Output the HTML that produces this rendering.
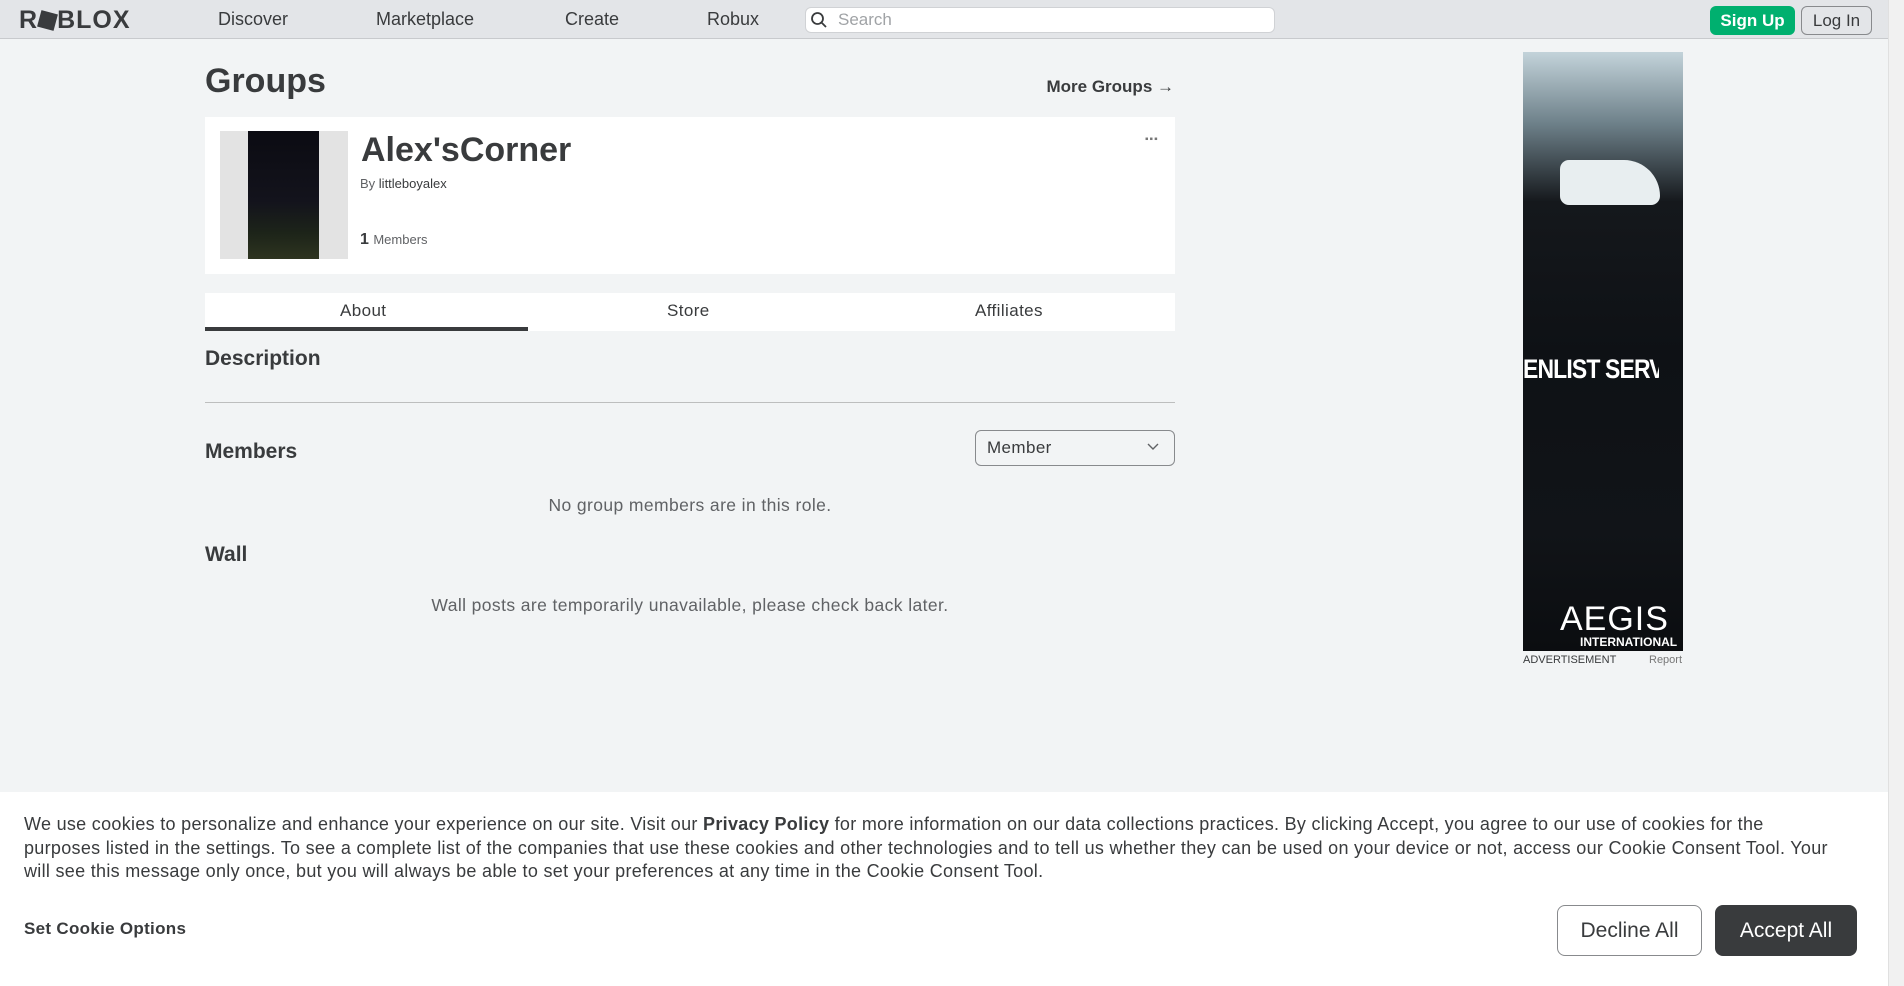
<!DOCTYPE html>
<html><head><meta charset="utf-8"><style>
*{box-sizing:border-box;margin:0;padding:0}
body{width:1904px;height:986px;overflow:hidden;background:#f2f4f5;font-family:"Liberation Sans",sans-serif;color:#393b3d;position:relative}
.abs{position:absolute}
.top{left:0;top:0;width:1888px;height:39px;background:#e3e5e8;border-bottom:1px solid #c8cacd}
.nav{font-size:18px;color:#393b3d;top:9px}
.sb{right:0;top:0;width:16px;height:986px;background:#f1f1f1;border-left:1px solid #e0e0e0}
.ls{letter-spacing:0.4px}
</style></head><body>
<div class="abs top"></div>
<div class="abs" style="left:19px;top:6px;font-size:25px;font-weight:900;letter-spacing:1px;color:#393b3d">R<span style="display:inline-block;width:17px;height:17px;background:#393b3d;transform:rotate(15deg);vertical-align:-1px;margin:0 1px"></span>BLOX</div>
<div class="abs nav" style="left:218px">Discover</div>
<div class="abs nav" style="left:376px">Marketplace</div>
<div class="abs nav" style="left:565px">Create</div>
<div class="abs nav" style="left:707px">Robux</div>
<div class="abs" style="left:805px;top:7px;width:470px;height:26px;background:#fff;border-radius:6px;border:1px solid #d0d2d5"></div>
<svg class="abs" style="left:810px;top:11px" width="18" height="18" viewBox="0 0 18 18"><circle cx="7.5" cy="7.5" r="5.5" fill="none" stroke="#393b3d" stroke-width="1.8"/><path d="M11.5 11.5L16 16" stroke="#393b3d" stroke-width="1.8"/></svg>
<div class="abs" style="left:838px;top:10px;font-size:17px;color:#a0a3a6">Search</div>
<div class="abs" style="left:1710px;top:6px;width:85px;height:29px;background:#00b06f;border-radius:6px;color:#fff;font-size:17px;font-weight:bold;text-align:center;line-height:29px">Sign Up</div>
<div class="abs" style="left:1801px;top:6px;width:71px;height:29px;border:1px solid #888a8d;border-radius:6px;color:#393b3d;font-size:17px;text-align:center;line-height:27px">Log In</div>
<div class="abs sb"></div>

<div class="abs" style="left:205px;top:62px;font-size:34px;font-weight:bold">Groups</div>
<div class="abs" style="right:730px;top:77px;font-size:17px;font-weight:600">More Groups →</div>
<div class="abs" style="left:205px;top:117px;width:970px;height:157px;background:#fff"></div>
<div class="abs" style="left:220px;top:131px;width:128px;height:128px;background:#e3e3e3"></div>
<div class="abs" style="left:248px;top:131px;width:71px;height:128px;background:linear-gradient(#0b0b12 0%,#13131c 55%,#1d2419 80%,#2e3420 100%)"></div>
<div class="abs" style="left:361px;top:131px;font-size:34px;font-weight:bold;color:#393b3d">Alex'sCorner</div>
<div class="abs" style="left:360px;top:176px;font-size:13px;color:#606265">By <span style="color:#393b3d">littleboyalex</span></div>
<div class="abs" style="left:360px;top:231px;font-size:16px;font-weight:bold">1 <span style="font-size:13px;font-weight:normal;color:#606265">Members</span></div>
<div class="abs" style="left:1145px;top:134px;font-size:10px;color:#777;letter-spacing:1px">▪▪▪</div>

<div class="abs" style="left:205px;top:293px;width:970px;height:38px;background:#fff"></div>
<div class="abs" style="left:205px;top:327px;width:323px;height:4px;background:#393b3d"></div>
<div class="abs ls" style="left:340px;top:301px;font-size:17px">About</div>
<div class="abs ls" style="left:667px;top:301px;font-size:17px">Store</div>
<div class="abs ls" style="left:975px;top:301px;font-size:17px">Affiliates</div>
<div class="abs" style="left:205px;top:347px;font-size:21px;font-weight:bold">Description</div>
<div class="abs" style="left:205px;top:402px;width:970px;height:1px;background:#bdbebe"></div>
<div class="abs" style="left:205px;top:440px;font-size:21px;font-weight:bold">Members</div>
<div class="abs" style="left:975px;top:430px;width:200px;height:36px;border:1px solid #888a8d;border-radius:6px;background:#f2f4f5"></div>
<div class="abs ls" style="left:987px;top:438px;font-size:17px">Member</div>
<svg class="abs" style="left:1147px;top:443px" width="12" height="8"><path d="M1 1l5 5 5-5" fill="none" stroke="#606265" stroke-width="1.4"/></svg>
<div class="abs ls" style="left:205px;top:495px;width:970px;text-align:center;font-size:17.5px;color:#606265">No group members are in this role.</div>
<div class="abs" style="left:205px;top:543px;font-size:21px;font-weight:bold">Wall</div>
<div class="abs ls" style="left:205px;top:595px;width:970px;text-align:center;font-size:17.5px;color:#606265">Wall posts are temporarily unavailable, please check back later.</div>

<div class="abs" style="left:1523px;top:52px;width:160px;height:599px;background:linear-gradient(#c3d3da 0%,#6d8089 12%,#15181c 25%,#0e1115 50%,#111418 80%,#0b0d10 100%)"></div>
<div class="abs" style="left:1560px;top:160px;width:100px;height:45px;background:#e8eef0;border-radius:10px 40px 10px 10px"></div>
<div class="abs" style="left:1523px;top:354px;width:160px;font-size:27px;font-weight:bold;color:#fff;white-space:nowrap;overflow:hidden;letter-spacing:-1px;transform:scaleX(0.85);transform-origin:left">ENLIST SERVE</div>
<div class="abs" style="left:1560px;top:600px;font-size:34px;color:#fff;letter-spacing:1px">AEGIS</div>
<div class="abs" style="left:1580px;top:635px;font-size:12px;font-weight:bold;color:#fff">INTERNATIONAL</div>
<div class="abs" style="left:1523px;top:654px;font-size:11px;color:#393b3d">ADVERTISEMENT</div>
<div class="abs" style="left:1649px;top:654px;font-size:11px;color:#777">Report</div>

<div class="abs" style="left:0;top:792px;width:1888px;height:194px;background:#fff"></div>
<div class="abs" style="left:24px;top:813px;width:1818px;font-size:18px;letter-spacing:0.3px;line-height:23.5px;color:#393b3d">We use cookies to personalize and enhance your experience on our site. Visit our <b>Privacy Policy</b> for more information on our data collections practices. By clicking Accept, you agree to our use of cookies for the purposes listed in the settings. To see a complete list of the companies that use these cookies and other technologies and to tell us whether they can be used on your device or not, access our Cookie Consent Tool. Your will see this message only once, but you will always be able to set your preferences at any time in the Cookie Consent Tool.</div>
<div class="abs" style="left:24px;top:919px;font-size:17px;font-weight:bold;letter-spacing:0.3px">Set Cookie Options</div>
<div class="abs" style="left:1557px;top:905px;width:145px;height:51px;border:1px solid #888a8d;border-radius:8px;text-align:center;line-height:49px;font-size:21px;color:#393b3d">Decline All</div>
<div class="abs" style="left:1715px;top:905px;width:142px;height:51px;background:#393b3d;border-radius:8px;text-align:center;line-height:51px;font-size:21px;color:#fff">Accept All</div>
</body></html>
